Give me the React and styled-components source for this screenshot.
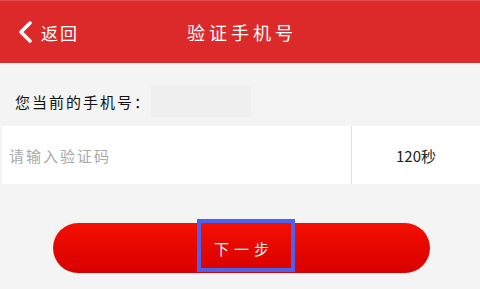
import React from 'react';
import styled, {createGlobalStyle} from 'styled-components';

const GlobalStyle = createGlobalStyle`
  html, body {
    margin: 0;
    padding: 0;
    background: #f4f4f4;
    font-family: "Noto Sans CJK SC", "Noto Sans", sans-serif;
  }
`;

const Page = styled.div`
  width: 480px;
  height: 289px;
  background: #f4f4f4;
  overflow: hidden;
`;

const Header = styled.header`
  position: relative;
  height: 63px;
  background: #dc2a2b;
  border-top: 1px solid #e24a4a;
  box-sizing: border-box;
  display: flex;
  align-items: center;
  justify-content: center;
  color: #fff;
`;

const Back = styled.div`
  position: absolute;
  left: 17px;
  top: 0;
  bottom: 0;
  display: flex;
  align-items: center;
  gap: 8px;
  font-size: 17px;
  letter-spacing: 2px;
`;

const Title = styled.h1`
  margin: 0;
  font-size: 18px;
  font-weight: 400;
  letter-spacing: 4px;
  padding-left: 4px;
`;

const PhoneRow = styled.div`
  height: 63px;
  display: flex;
  align-items: flex-start;
  padding: 22px 0 0 15px;
  box-sizing: border-box;
`;

const Label = styled.span`
  font-size: 15px;
  line-height: 34px;
  letter-spacing: 2px;
  color: #111;
`;

const PhoneField = styled.div`
  width: 100px;
  height: 32px;
  background: #efefef;
`;

const CodeRow = styled.div`
  height: 58px;
  margin-left: 2px;
  background: #fff;
  display: grid;
  grid-template-columns: 350px 1fr;
`;

const CodeInput = styled.div`
  display: flex;
  align-items: center;
  padding-left: 7px;
  font-size: 15px;
  letter-spacing: 2px;
  color: #a9a9a9;
  border-right: 1px solid #e2ded8;
`;

const Timer = styled.div`
  display: flex;
  align-items: center;
  justify-content: center;
  font-size: 15px;
  color: #222;
`;

const ButtonWrap = styled.div`
  display: flex;
  justify-content: center;
  padding-top: 39px;
  padding-left: 3px;
`;

const NextButton = styled.button`
  width: 377px;
  height: 50px;
  border: none;
  border-radius: 25px;
  background: linear-gradient(#f50f00, #d70000);
  display: flex;
  align-items: center;
  justify-content: center;
  padding: 0;
  font-family: inherit;
  cursor: pointer;
`;

const ButtonLabel = styled.span`
  width: 98px;
  height: 53px;
  box-sizing: border-box;
  border: 4px solid #4b62ee;
  margin: 0 0 6px 8px;
  display: flex;
  align-items: center;
  justify-content: center;
  padding: 6px 8px 0 0;
  color: #fff;
  font-size: 15px;
  letter-spacing: 5px;
  text-indent: 5px;
`;

export default function App() {
  return (
    <Page>
      <GlobalStyle />
      <Header>
        <Back>
          <svg width="16" height="22" viewBox="0 0 16 22">
            <polyline points="13,2 4,11 13,20" fill="none" stroke="#fff" strokeWidth="3.5" strokeLinecap="round" strokeLinejoin="round" />
          </svg>
          返回
        </Back>
        <Title>验证手机号</Title>
      </Header>
      <PhoneRow>
        <Label>您当前的手机号：</Label>
        <PhoneField />
      </PhoneRow>
      <CodeRow>
        <CodeInput>请输入验证码</CodeInput>
        <Timer>120秒</Timer>
      </CodeRow>
      <ButtonWrap>
        <NextButton>
          <ButtonLabel>下一步</ButtonLabel>
        </NextButton>
      </ButtonWrap>
    </Page>
  );
}
